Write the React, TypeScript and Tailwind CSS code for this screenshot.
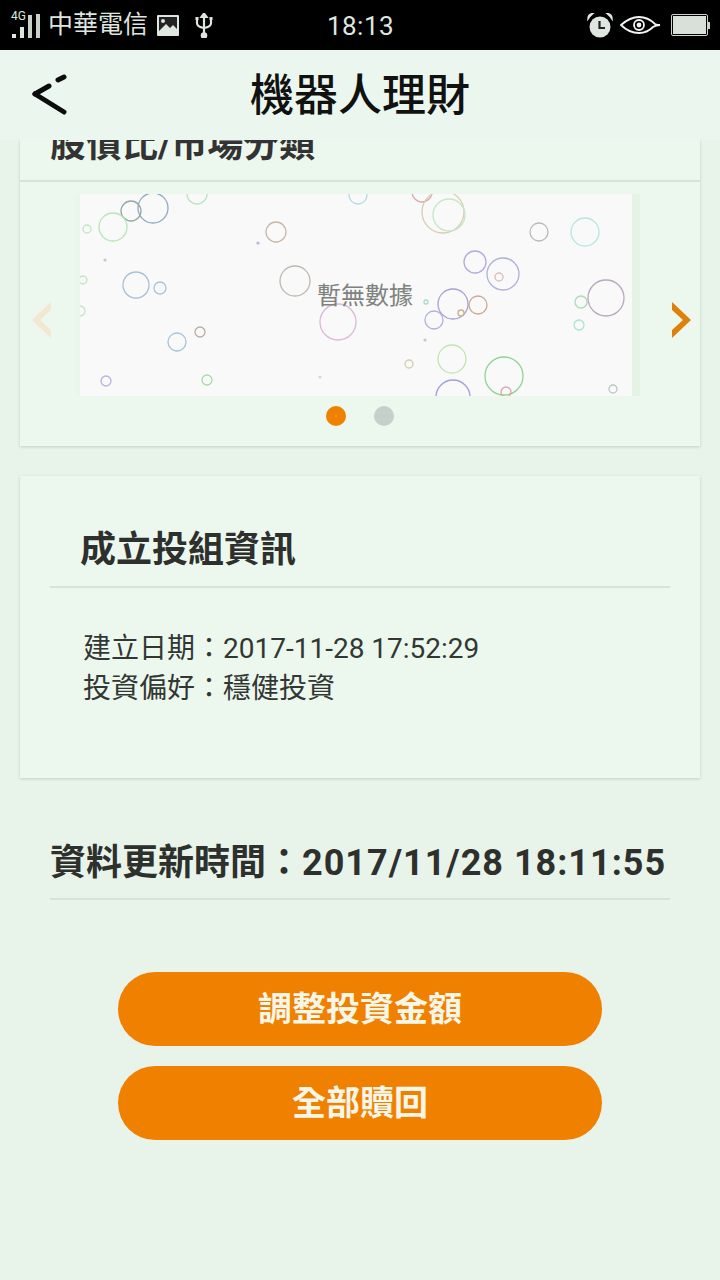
const circles: [number, number, number, string][] = [
  [153, 208, 15, "#8fa9c4"], [131, 211, 10, "#93a8a8"], [113, 227, 14, "#b5e6b5"], [87, 229, 4, "#bfe6bf"],
  [197, 194, 10, "#b5e6c5"], [276, 232, 10, "#c9b8a8"], [358, 195, 9, "#b5dbe6"],
  [422, 192, 10, "#d9a8a8"], [443, 212, 21, "#d9ccb0"], [449, 215, 16, "#c5e6c5"], [539, 232, 9, "#bdb8b8"], [585, 232, 14, "#b5e6df"],
  [136, 285, 13, "#a8c0d9"], [160, 288, 6, "#a8c4d9"], [295, 281, 15, "#bdb8b0"], [83, 280, 4, "#bfe6bf"], [80, 311, 5, "#bfe6bf"],
  [338, 322, 18, "#dcb8d9"], [177, 342, 9, "#a3c4dc"], [200, 332, 5, "#b8ada0"], [106, 381, 5, "#b8b5dc"], [207, 380, 5, "#a8dca8"],
  [475, 262, 11, "#b8a8dc"], [503, 274, 16, "#b0b0dc"], [499, 277, 4, "#dcbcbc"], [453, 304, 15, "#a8a0d0"], [478, 305, 9, "#c9a890"],
  [461, 313, 3, "#c9b090"], [434, 320, 9, "#b0b0d9"], [426, 302, 2, "#a8dcc8"], [606, 298, 18, "#b8a8bc"], [581, 302, 6, "#a8dcb8"],
  [579, 325, 5, "#a8e6cc"], [452, 359, 14, "#c0e6b0"], [409, 364, 4, "#d0d0a8"], [504, 376, 19, "#90d490"], [506, 392, 5, "#d9a8a8"],
  [453, 397, 17, "#a0a0dc"], [613, 389, 4, "#b8c4c4"],
];

const dots: [number, number, string][] = [
  [258, 243, "#b5b5dc"], [105, 260, "#c5c5dc"], [425, 340, "#c5c5dc"], [320, 377, "#d8dcc0"],
];

function Chart() {
  return (
    <div className="relative h-[202px] w-[552px] overflow-hidden bg-[#f8f9f8]">
      <svg className="h-full w-full" viewBox="80 194 552 202" fill="none">
        {circles.map(([cx, cy, r, color], i) => (
          <circle key={i} cx={cx} cy={cy} r={r} stroke={color} strokeWidth="1.3" />
        ))}
        {dots.map(([cx, cy, color], i) => (
          <circle key={i} cx={cx} cy={cy} r="1.6" fill={color} />
        ))}
      </svg>
      <span className="absolute left-[237px] top-[86px] text-[24px] leading-[32px] text-[#7d827e]">暫無數據</span>
    </div>
  );
}

export default function App() {
  return (
    <div lang="zh-TW" className="flex h-[1280px] w-[720px] flex-col overflow-hidden bg-[#e8f4ea] font-['Roboto','Noto_Sans_CJK_TC',sans-serif]">
      {/* status bar */}
      <div className="grid h-[50px] shrink-0 grid-cols-[1fr_auto_1fr] items-center bg-black pl-[11px] pr-[10px] text-[#dfe5df]">
        <div className="flex items-center">
          <div className="relative flex h-[26px] w-[31px] items-end gap-[4px] pl-[1px]">
            <span className="absolute left-0 top-[-2px] text-[12px] leading-[12px]">4G</span>
            <span className="h-[4px] w-[4px] bg-[#dfe5df]" />
            <span className="h-[11px] w-[4px] bg-[#dfe5df]" />
            <span className="h-[23px] w-[4px] bg-[#c9cfc9]" />
            <span className="h-[24px] w-[4px] bg-[#c9cfc9]" />
          </div>
          <span className="ml-[6px] text-[25px] leading-[30px]">中華電信</span>
          <svg className="ml-[9px]" width="22" height="21" viewBox="0 0 22 21">
            <rect width="22" height="21" rx="1" fill="#dfe5df" />
            <rect x="2" y="2" width="18" height="15" fill="#222" />
            <circle cx="6" cy="6" r="2" fill="#dfe5df" />
            <path d="M2 16 L9 9 L13 13 L16 10 L20 14 V19 H2Z" fill="#dfe5df" />
          </svg>
          <svg className="ml-[16px]" width="18" height="25" viewBox="0 0 18 25" fill="none" stroke="#dfe5df" strokeWidth="2.2">
            <path d="M9 3 V21" />
            <path d="M2 6 V10 Q2 14 9 15 Q16 14 16 10 V6" />
            <circle cx="9" cy="22.5" r="2.2" fill="#dfe5df" />
            <path d="M6.5 4 L9 0.5 L11.5 4Z" fill="#dfe5df" />
            <rect x="0.5" y="4" width="3" height="3" fill="#dfe5df" stroke="none" />
            <rect x="14.5" y="4" width="3" height="3" fill="#dfe5df" stroke="none" />
          </svg>
        </div>
        <span className="pt-[1px] text-[26px] leading-[30px] tracking-[0.5px]">18:13</span>
        <div className="flex items-center justify-end">
          <svg width="26" height="25" viewBox="0 0 26 25">
            <circle cx="13" cy="14" r="10.5" fill="#dfe5df" />
            <path d="M1 6 Q1 1 6 0.5 Q3 3 1 6Z M25 6 Q25 1 20 0.5 Q23 3 25 6Z" fill="#dfe5df" stroke="#dfe5df" strokeWidth="1.5" />
            <path d="M12.5 8 V15 H18" stroke="#222" strokeWidth="2.2" fill="none" />
          </svg>
          <svg className="ml-[7px]" width="40" height="18" viewBox="0 0 40 18" fill="none" stroke="#f2f4f2" strokeWidth="1.8">
            <path d="M1 9 Q10 1 19 1 Q28 1 35 8 Q37 9 40 9 Q36 9 33 11 Q27 17 19 17 Q9 17 1 9Z" />
            <circle cx="19" cy="9" r="5" />
            <circle cx="19" cy="9" r="1.5" fill="#f2f4f2" />
          </svg>
          <div className="ml-[11px] flex items-center">
            <div className="h-[22px] w-[37px] rounded-[2px] border border-[#cdd3cd] bg-black p-[1px]">
              <div className="h-full w-full bg-[#d9e0d9]" />
            </div>
            <span className="h-[7px] w-[2px] bg-[#cdd3cd]" />
          </div>
        </div>
      </div>

      {/* nav bar */}
      <div className="relative z-10 flex h-[90px] shrink-0 items-center justify-center bg-[#ebf7ee]">
        <svg className="absolute left-[32px] top-[24px]" width="36" height="42" viewBox="0 0 36 42" fill="none" stroke="#0c0c0c" strokeWidth="5" strokeLinecap="round">
          <path d="M3 20 L17 12" />
          <path d="M26 6 L32 3" />
          <path d="M3 20 L32 38" />
        </svg>
        <span className="pt-[1px] text-[44px] font-medium leading-[52px] text-[#111]">機器人理財</span>
      </div>

      <div className="flex flex-1 flex-col px-[20px]">
        {/* carousel card, scrolled under the nav bar */}
        <div className="relative h-[306px] bg-[#ecf8ee] shadow-[0_1px_3px_rgba(0,0,0,0.16)]">
          <div className="h-[42px] overflow-hidden border-b-2 border-[#d8e2da] pl-[30px]">
            <div className="mt-[-18px] text-[36px] font-bold leading-[46px] text-[#333]">股債比/市場分類</div>
          </div>
          <div className="flex pl-[55px] pt-[12px]">
            <div className="border-l-[5px] border-r-[8px] border-l-[#e9f7eb] border-r-[#e5f3e7]">
              <Chart />
            </div>
          </div>
          <svg className="absolute left-[11px] top-[161px]" width="22" height="38" viewBox="0 0 22 38">
            <path d="M20 1 V9 L9 19 L20 29 V37 L1 19Z" fill="#f3e7d0" />
          </svg>
          <svg className="absolute left-[650px] top-[161px]" width="22" height="38" viewBox="0 0 22 38">
            <path d="M2 1 V9 L13 19 L2 29 V37 L21 19Z" fill="#e07f0a" />
          </svg>
          <div className="absolute left-[306px] top-[266px] flex gap-[28px]">
            <span className="h-[20px] w-[20px] rounded-full bg-[#f08000]" />
            <span className="h-[20px] w-[20px] rounded-full bg-[#c5d0ca]" />
          </div>
        </div>

        {/* portfolio info card */}
        <div className="mt-[30px] h-[302px] bg-[#ecf8ee] px-[30px] shadow-[0_1px_3px_rgba(0,0,0,0.16)]">
          <div className="flex h-[112px] items-end border-b-2 border-[#d8e2da] pb-[13px] pl-[30px] text-[36px] font-bold leading-[46px] text-[#2d302d]">
            成立投組資訊
          </div>
          <div className="pl-[33px] pt-[41px] text-[28px] leading-[40px] text-[#333733]">
            <div>建立日期：2017-11-28 17:52:29</div>
            <div>投資偏好：穩健投資</div>
          </div>
        </div>

        {/* update time */}
        <div className="mx-[30px] mt-[56px] flex h-[66px] items-start whitespace-nowrap border-b-2 border-[#d8e2da] pt-[6px] text-[36px] font-bold leading-[46px] text-[#2d302d]">
          資料更新時間：<span className="tracking-[1px]">2017/11/28 18:11:55</span>
        </div>

        {/* actions */}
        <div className="mt-[72px] flex flex-col items-center gap-[20px]">
          <button className="h-[74px] w-[484px] rounded-full bg-[#f08000] text-[34px] font-bold text-[#f6f6e8]">調整投資金額</button>
          <button className="h-[74px] w-[484px] rounded-full bg-[#f08000] text-[34px] font-bold text-[#f6f6e8]">全部贖回</button>
        </div>
      </div>
    </div>
  );
}
